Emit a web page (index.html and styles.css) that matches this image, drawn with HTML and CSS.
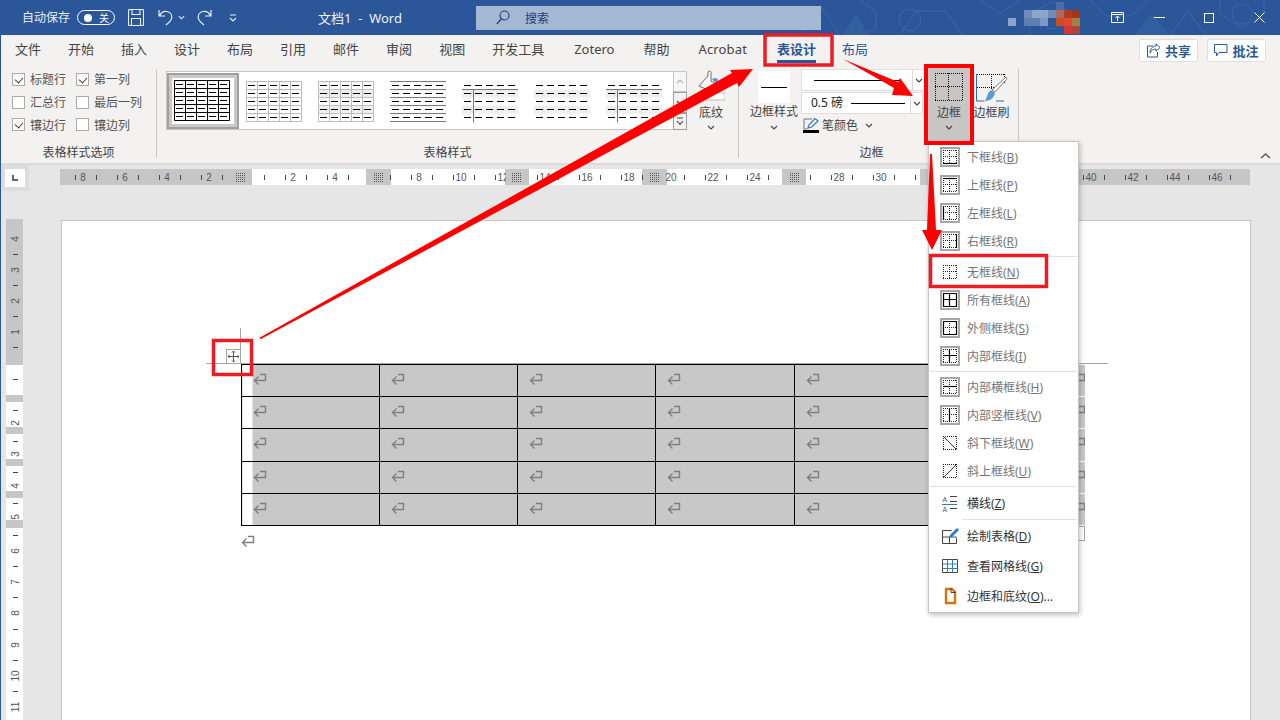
FILE: index.html
```html
<!DOCTYPE html>
<html lang="zh-CN">
<head>
<meta charset="utf-8">
<title>文档1 - Word</title>
<link rel="stylesheet" href="styles.css">
</head>
<body>
<svg class="defs" width="0" height="0" aria-hidden="true">
  <defs>
    <pattern id="dashes" width="11" height="8" patternUnits="userSpaceOnUse"><rect x="2" y="4" width="7" height="1" fill="#000"/></pattern>
    <pattern id="rtick" width="21" height="16" patternUnits="userSpaceOnUse"><rect x="12" y="6" width="1" height="5" fill="#444"/></pattern>
    <pattern id="dots" width="2" height="2" patternUnits="userSpaceOnUse"><rect width="1" height="1" fill="#555"/></pattern>
    <symbol id="frame" viewBox="0 0 20 20"><rect x="1" y="1" width="18" height="18" fill="#fff" stroke="#a6a6a6" stroke-width="2"/></symbol>
    <symbol id="dotgrid" viewBox="0 0 20 20"><path d="M3 3.500h14M3 16.500h14M3 9.500h14M3.500 3v14M16.500 3v14M9.500 3v14" fill="none" stroke="#222" stroke-dasharray="1 1"/></symbol>
    <symbol id="crossdots" viewBox="0 0 20 20"><path d="M3 9.500h14M9.500 3v14" fill="none" stroke="#222" stroke-dasharray="1 1"/></symbol>
    <symbol id="diagbox" viewBox="0 0 20 20"><path d="M3 3.500h14M3 16.500h14M3.500 3v14M16.500 3v14" fill="none" stroke="#222" stroke-dasharray="1 1"/></symbol>
    <symbol id="ret" viewBox="0 0 14 13"><path d="M7 1.500h5.500v6H2M5.500 3.500L1.500 7.500l4 4" fill="none" stroke="#7f7f7f" stroke-width="1.400"/></symbol>
    <symbol id="chev" viewBox="0 0 8 5"><path d="M1 1l3 3 3-3" fill="none" stroke="#444" stroke-width="1.100"/></symbol>
    <symbol id="t-dash" viewBox="0 0 56 42"><rect x="1" y="0" width="55" height="40" fill="url(#dashes)"/></symbol>
    <symbol id="t-cells" viewBox="0 0 56 42"><path d="M.5.500h55v40H.5zM11.500.500v40M22.500.500v40M33.500.500v40M44.500.500v40M.5 8.500h55M.5 16.500h55M.5 24.500h55M.5 32.500h55" fill="none" stroke="currentColor"/></symbol>
    <symbol id="t-bands" viewBox="0 0 56 42"><rect x="0" y="9" width="56" height="7.500" fill="#eee"/><rect x="0" y="25" width="56" height="7.500" fill="#eee"/></symbol>
  </defs>
</svg>

<div class="window">
  <header class="titlebar">
    <svg class="pattern" width="490" height="35" viewBox="0 0 490 35"><g fill="none" stroke="#3b68a8"><path d="M10 35L30 5l20 30zM70 0l16 12v16l-16 7M110 35l16-24h30l16 24M190 0l20 14 20-14M240 35V14l22-12 22 12v21M300 0l16 16h26l16-16M380 35l18-24 18 24M430 0v14l22 14 22-14V0"/><circle cx="262" cy="20" r="9"/><circle cx="120" cy="20" r="11"/><circle cx="452" cy="14" r="10"/></g><path d="M345 35l17-22 17 22zM52 35l14-20 14 20z" fill="#325f9f"/></svg>
    <span class="autosave">自动保存</span>
    <span class="toggle"><i class="knob"></i><span class="toggle-text">关</span></span>
    <svg class="qa-save" width="16" height="17" viewBox="0 0 16 17"><path d="M.5 1.500a1 1 0 0 1 1-1h13a1 1 0 0 1 1 1v14a1 1 0 0 1-1 1h-13a1 1 0 0 1-1-1zM4 .5v5h8v-5M3.500 16.500v-7h9v7" fill="none" stroke="#eaf0f8" stroke-width="1.100"/></svg>
    <svg class="qa-undo" width="15" height="17" viewBox="0 0 15 17"><path d="M1 1v6h6M1.500 7C3 3.500 6 2 9 2.500c3 .6 5 3.200 4.800 6-.2 3-2.600 5-5.800 7.500" fill="none" stroke="#eaf0f8" stroke-width="1.200"/></svg>
    <svg class="qa-chev" width="7" height="5" viewBox="0 0 8 5"><path d="M1 1l3 3 3-3" fill="none" stroke="#eaf0f8" stroke-width="1.200"/></svg>
    <svg class="qa-redo" width="15" height="17" viewBox="0 0 15 17"><path d="M14 1v6H8M13.500 7C12 3.500 9 2 6 2.500c-3 .6-5 3.200-4.800 6 .2 3 2.600 5 5.800 7.500" fill="none" stroke="#eaf0f8" stroke-width="1.200"/></svg>
    <svg class="qa-more" width="8" height="8" viewBox="0 0 8 8"><path d="M1 1h6M1 4l3 3 3-3" fill="none" stroke="#eaf0f8" stroke-width="1.100"/></svg>
    <span class="doc-title">文档1&nbsp; -&nbsp; Word</span>
    <div class="search">
      <svg width="14" height="15" viewBox="0 0 14 15"><circle cx="8.500" cy="5.500" r="4.500" fill="none" stroke="#1f3f72" stroke-width="1.100"/><path d="M5.300 9L.8 14" stroke="#1f3f72" stroke-width="1.200"/></svg>
      <span>搜索</span>
    </div>
    <svg class="avatar" width="72" height="32" viewBox="0 0 72 32">
      <rect x="16" y="8" width="40" height="8" fill="#6f8dbb"/><rect x="24" y="8" width="16" height="8" fill="#8ea5c9"/>
      <rect x="0" y="16" width="8" height="8" fill="#8ea5c9"/><rect x="16" y="16" width="24" height="8" fill="#5f7fb2"/><rect x="32" y="16" width="8" height="8" fill="#7f99c2"/>
      <rect x="48" y="0" width="8" height="8" fill="#4d6ca5"/>
      <rect x="48" y="8" width="8" height="8" fill="#a86a62"/><rect x="56" y="8" width="8" height="8" fill="#b23a22"/><rect x="64" y="8" width="8" height="8" fill="#9e3820"/>
      <rect x="48" y="16" width="8" height="8" fill="#c8501f"/><rect x="56" y="16" width="8" height="8" fill="#e24533"/><rect x="64" y="16" width="8" height="8" fill="#a08344"/>
      <rect x="56" y="24" width="8" height="8" fill="#d23a33"/><rect x="64" y="24" width="8" height="8" fill="#b04535"/>
    </svg>
    <svg class="win-ribbon" width="13" height="11" viewBox="0 0 13 11"><path d="M.5.500h12v10H.5zM.5 2.500h12M6.500 9V4.500M4.500 6l2-2 2 2" fill="none" stroke="#fff"/></svg>
    <svg class="win-min" width="11" height="1" viewBox="0 0 11 1"><rect width="11" height="1" fill="#fff"/></svg>
    <svg class="win-max" width="10" height="10" viewBox="0 0 10 10"><rect x=".5" y=".5" width="9" height="9" fill="none" stroke="#fff"/></svg>
    <svg class="win-close" width="11" height="11" viewBox="0 0 11 11"><path d="M.5.500l10 10M10.500.500l-10 10" stroke="#fff"/></svg>
  </header>

  <nav class="tabs">
    <span class="tab">文件</span><span class="tab">开始</span><span class="tab">插入</span><span class="tab">设计</span><span class="tab">布局</span><span class="tab">引用</span><span class="tab">邮件</span><span class="tab">审阅</span><span class="tab">视图</span><span class="tab">开发工具</span><span class="tab tab-zotero">Zotero</span><span class="tab">帮助</span><span class="tab tab-acrobat">Acrobat</span><span class="tab tab-active">表设计</span><span class="tab tab-blue">布局</span>
    <span class="tab-actions">
      <span class="pill"><svg width="15" height="15" viewBox="0 0 15 15"><path d="M10 .8l4 3.700-4 3.700V6C7 6 5 7.500 4 10c0-4 2-6.500 6-7zM7 3H1.500v11h10V9" fill="none" stroke="#2b579a" stroke-width="1"/></svg>共享</span>
      <span class="pill"><svg width="14" height="14" viewBox="0 0 14 14"><path d="M.5 1.500h12.500v8H5L2.500 13v-3.500h-2z" fill="none" stroke="#2b579a"/></svg>批注</span>
    </span>
  </nav>

  <section class="ribbon">
    <div class="group g-options">
      <div class="checks">
        <label class="check"><i class="box on"></i>标题行</label><label class="check"><i class="box on"></i>第一列</label>
        <label class="check"><i class="box"></i>汇总行</label><label class="check"><i class="box"></i>最后一列</label>
        <label class="check"><i class="box on"></i>镶边行</label><label class="check"><i class="box"></i>镶边列</label>
      </div>
      <div class="group-label">表格样式选项</div>
    </div>

    <div class="group g-styles">
      <div class="styles-row">
        <div class="gallery">
          <div class="thumb thumb-sel"><svg width="56" height="42"><use href="#t-cells" class="ink-black"/><use href="#t-dash"/></svg></div>
          <div class="thumb"><svg width="56" height="42"><use href="#t-cells" class="ink-light"/><use href="#t-dash"/></svg></div>
          <div class="thumb"><svg width="56" height="42"><use href="#t-bands"/><use href="#t-cells" class="ink-light"/><use href="#t-dash"/></svg></div>
          <div class="thumb"><svg width="56" height="42" viewBox="0 0 56 42"><path d="M0 .5h56M0 8.500h56M0 16.500h56M0 24.500h56M0 32.500h56M0 40.500h56" stroke="#777"/><use href="#t-dash"/></svg></div>
          <div class="thumb"><svg width="56" height="42" viewBox="0 0 56 42"><use href="#t-bands"/><path d="M0 8.500h56M11.500 8.500v33" stroke="#777"/><use href="#t-dash"/></svg></div>
          <div class="thumb"><svg width="56" height="42"><use href="#t-bands"/><use href="#t-dash"/></svg></div>
          <div class="thumb"><svg width="56" height="42" viewBox="0 0 56 42"><use href="#t-bands"/><path d="M0 8.500h56M11.500 8.500v33" stroke="#777"/><use href="#t-dash"/></svg></div>
        </div>
        <div class="scroller">
          <span class="sc sc-up"><svg width="8" height="5" viewBox="0 0 8 5"><path d="M1 4l3-3 3 3" fill="none" stroke="#b5b5b5" stroke-width="1.100"/></svg></span>
          <span class="sc sc-down"><svg width="8" height="5"><use href="#chev"/></svg></span>
          <span class="sc sc-more"><svg width="8" height="9" viewBox="0 0 8 9"><path d="M1 1h6M1 4l3 3.500L7 4" fill="none" stroke="#444" stroke-width="1.100"/></svg></span>
        </div>
        <div class="big-btn shade-btn">
          <svg width="28" height="32" viewBox="0 0 28 32"><path d="M2 16L11 6V2.500a1.500 1.500 0 0 1 3 0V11l4 3-7 6z" fill="#fff" stroke="#666"/><path d="M15 9c3-2 6-1 6 1s-2 2.500-4 2" fill="#5b9bd5"/><rect x="4" y="23" width="24" height="7" fill="#fff" stroke="#bbb"/></svg>
          <span>底纹</span>
          <svg class="chev" width="8" height="5"><use href="#chev"/></svg>
        </div>
      </div>
      <div class="group-label">表格样式</div>
    </div>

    <div class="group g-borders">
      <div class="borders-row">
        <div class="big-btn style-btn">
          <span class="swatch"><i></i></span>
          <span>边框样式</span>
          <svg class="chev" width="8" height="5"><use href="#chev"/></svg>
        </div>
        <div class="pen-col">
          <div class="combo"><span class="combo-main"><i class="pen-line pen-long"></i></span><span class="combo-arrow"><svg width="8" height="5"><use href="#chev"/></svg></span></div>
          <div class="combo combo-2"><span class="combo-main"><span class="weight">0.5 磅</span><i class="pen-line"></i></span><span class="combo-arrow"><svg width="8" height="5"><use href="#chev"/></svg></span></div>
          <div class="pen-color">
            <svg width="16" height="15" viewBox="0 0 16 15"><path d="M1 11V1h8M1 11h3" fill="none" stroke="#777"/><path d="M5 10l1-3 6-6.500 3 2.500-6.500 6z" fill="#fff" stroke="#2a7cc7" stroke-width="1.200"/><rect y="12" width="16" height="3" fill="#000"/></svg>
            <span>笔颜色</span>
            <svg width="8" height="5"><use href="#chev"/></svg>
          </div>
        </div>
        <div class="big-btn borders-btn">
          <svg width="28" height="28" viewBox="0 0 28 28"><path d="M0 .5h28M0 27.500h28M0 13.500h28M.5 0v28M27.500 0v28M13.500 0v28" fill="none" stroke="#111" stroke-dasharray="1 1"/></svg>
          <span>边框</span>
          <svg class="chev" width="8" height="5"><use href="#chev"/></svg>
        </div>
        <div class="big-btn brush-btn">
          <svg width="32" height="32" viewBox="0 0 32 32"><path d="M1 2.500h28M1 15.500h20M15.500 2v16M28.500 2v10" fill="none" stroke="#111" stroke-dasharray="1 1"/><path d="M.5 2v27h8M20 29h8" fill="none" stroke="#2b6cb0"/><path d="M30 5c1 1 1 2 0 3L19 20l-3-2z" fill="#fff" stroke="#777"/><path d="M15 18l4 3c-1 5-5 8-10 8 2-3 2-8 6-11z" fill="#5b9bd5"/></svg>
          <span>边框刷</span>
        </div>
      </div>
      <div class="group-label borders-label">边框</div>
    </div>

    <svg class="collapse" width="11" height="6" viewBox="0 0 11 6"><path d="M1 5l4.500-4L10 5" fill="none" stroke="#444" stroke-width="1.200"/></svg>
  </section>

  <main class="workspace">
    <div class="corner"><div class="tabstop"><svg width="6" height="6" viewBox="0 0 6 6"><path d="M0 0h2v4h4v2H0z" fill="#666"/></svg></div></div>
    <svg class="hruler" width="1190" height="16" viewBox="60 0 1190 16">
      <rect x="60" width="1190" height="16" fill="#c6c6c6"/>
      <rect x="252" width="114" height="16" fill="#fff"/><rect x="391" width="114" height="16" fill="#fff"/><rect x="529" width="113" height="16" fill="#fff"/><rect x="667" width="115" height="16" fill="#fff"/><rect x="806" width="114" height="16" fill="#fff"/>
      <rect x="60" width="1190" height="16" fill="url(#rtick)"/>
      <g class="rtext">
        <text x="83" y="12">8</text><text x="125" y="12">6</text><text x="167" y="12">4</text><text x="209" y="12">2</text>
        <text x="293" y="12">2</text><text x="335" y="12">4</text><text x="419" y="12">8</text><text x="461" y="12">10</text><text x="503" y="12">12</text><text x="545" y="12">14</text><text x="587" y="12">16</text><text x="629" y="12">18</text><text x="671" y="12">20</text><text x="713" y="12">22</text><text x="755" y="12">24</text><text x="839" y="12">28</text><text x="881" y="12">30</text><text x="1091" y="12">40</text><text x="1133" y="12">42</text><text x="1175" y="12">44</text><text x="1217" y="12">46</text>
      </g>
      <rect x="232" width="19" height="16" fill="#c6c6c6"/><rect x="366" width="23" height="16" fill="#c6c6c6"/><rect x="506" width="22" height="16" fill="#c6c6c6"/><rect x="644" width="22" height="16" fill="#c6c6c6"/><rect x="783" width="22" height="16" fill="#c6c6c6"/><rect x="920" width="20" height="16" fill="#c6c6c6"/>
      <rect x="236" y="3" width="10" height="10" fill="url(#dots)"/><rect x="374" y="3" width="10" height="10" fill="url(#dots)"/><rect x="512" y="3" width="10" height="10" fill="url(#dots)"/><rect x="650" y="3" width="10" height="10" fill="url(#dots)"/><rect x="789" y="3" width="10" height="10" fill="url(#dots)"/>
    </svg>
    <svg class="vruler" width="17" height="501" viewBox="0 219 17 501">
      <rect y="219" width="17" height="501" fill="#fff"/>
      <rect y="219" width="17" height="146" fill="#c6c6c6"/>
      <path d="M7 254.500h5M7 285.500h5M7 316.500h5M7 347.500h5M7 379.500h5M7 410.500h5M7 441.500h5M7 472.500h5M7 503.500h5M7 535.500h5M7 566.500h5M7 597.500h5M7 629.500h5M7 660.500h5M7 691.500h5" stroke="#444"/>
      <g class="rtext">
        <text transform="translate(13 239) rotate(-90)">4</text><text transform="translate(13 270) rotate(-90)">3</text><text transform="translate(13 301) rotate(-90)">2</text><text transform="translate(13 332) rotate(-90)">1</text>
        <text transform="translate(13 423) rotate(-90)">2</text><text transform="translate(13 454) rotate(-90)">3</text><text transform="translate(13 486) rotate(-90)">4</text><text transform="translate(13 517) rotate(-90)">5</text><text transform="translate(13 551) rotate(-90)">6</text><text transform="translate(13 582) rotate(-90)">7</text><text transform="translate(13 613) rotate(-90)">8</text><text transform="translate(13 645) rotate(-90)">9</text><text transform="translate(13 676) rotate(-90)">10</text><text transform="translate(13 707) rotate(-90)">11</text>
      </g>
      <rect y="395" width="17" height="7" fill="#c6c6c6"/><rect y="427" width="17" height="7" fill="#c6c6c6"/><rect y="459" width="17" height="7" fill="#c6c6c6"/><rect y="491" width="17" height="7" fill="#c6c6c6"/><rect y="520" width="17" height="8" fill="#c6c6c6"/>
    </svg>

    <article class="page">
      <i class="guide guide-h"></i><i class="guide guide-v"></i>
      <span class="move-handle"><svg width="11" height="11" viewBox="0 0 11 11"><path d="M5.500 0v11M0 5.500h11M4 1.500L5.500 0 7 1.500M4 9.500L5.500 11 7 9.500M1.500 4L0 5.500 1.500 7M9.500 4L11 5.500 9.500 7" fill="none" stroke="#555"/></svg></span>
      <table class="doc-table">
        <tr><td class="first"><svg width="14" height="13"><use href="#ret"/></svg></td><td><svg width="14" height="13"><use href="#ret"/></svg></td><td><svg width="14" height="13"><use href="#ret"/></svg></td><td><svg width="14" height="13"><use href="#ret"/></svg></td><td><svg width="14" height="13"><use href="#ret"/></svg></td><td></td><td class="last"></td><td class="eor"><svg width="14" height="13"><use href="#ret"/></svg></td></tr>
        <tr><td class="first"><svg width="14" height="13"><use href="#ret"/></svg></td><td><svg width="14" height="13"><use href="#ret"/></svg></td><td><svg width="14" height="13"><use href="#ret"/></svg></td><td><svg width="14" height="13"><use href="#ret"/></svg></td><td><svg width="14" height="13"><use href="#ret"/></svg></td><td></td><td class="last"></td><td class="eor"><svg width="14" height="13"><use href="#ret"/></svg></td></tr>
        <tr class="row-tall"><td class="first"><svg width="14" height="13"><use href="#ret"/></svg></td><td><svg width="14" height="13"><use href="#ret"/></svg></td><td><svg width="14" height="13"><use href="#ret"/></svg></td><td><svg width="14" height="13"><use href="#ret"/></svg></td><td><svg width="14" height="13"><use href="#ret"/></svg></td><td></td><td class="last"></td><td class="eor"><svg width="14" height="13"><use href="#ret"/></svg></td></tr>
        <tr><td class="first"><svg width="14" height="13"><use href="#ret"/></svg></td><td><svg width="14" height="13"><use href="#ret"/></svg></td><td><svg width="14" height="13"><use href="#ret"/></svg></td><td><svg width="14" height="13"><use href="#ret"/></svg></td><td><svg width="14" height="13"><use href="#ret"/></svg></td><td></td><td class="last"></td><td class="eor"><svg width="14" height="13"><use href="#ret"/></svg></td></tr>
        <tr><td class="first"><svg width="14" height="13"><use href="#ret"/></svg></td><td><svg width="14" height="13"><use href="#ret"/></svg></td><td><svg width="14" height="13"><use href="#ret"/></svg></td><td><svg width="14" height="13"><use href="#ret"/></svg></td><td><svg width="14" height="13"><use href="#ret"/></svg></td><td></td><td class="last"></td><td class="eor"><svg width="14" height="13"><use href="#ret"/></svg></td></tr>
      </table>
      <svg class="para-mark" width="14" height="13"><use href="#ret"/></svg>
      <i class="resize-handle"></i>
    </article>
  </main>

  <ul class="menu">
    <li class="mi"><svg width="20" height="20" viewBox="0 0 20 20"><use href="#frame"/><use href="#dotgrid"/><path d="M3 16.500h14" stroke="#000" stroke-width="1.200"/></svg><span>下框线(<u>B</u>)</span></li>
    <li class="mi"><svg width="20" height="20" viewBox="0 0 20 20"><use href="#frame"/><use href="#dotgrid"/><path d="M3 3.500h14" stroke="#000" stroke-width="1.200"/></svg><span>上框线(<u>P</u>)</span></li>
    <li class="mi"><svg width="20" height="20" viewBox="0 0 20 20"><use href="#frame"/><use href="#dotgrid"/><path d="M3.500 3v14" stroke="#000" stroke-width="1.200"/></svg><span>左框线(<u>L</u>)</span></li>
    <li class="mi mi-sep"><svg width="20" height="20" viewBox="0 0 20 20"><use href="#frame"/><use href="#dotgrid"/><path d="M16.500 3v14" stroke="#000" stroke-width="1.200"/></svg><span>右框线(<u>R</u>)</span></li>
    <li class="mi"><svg width="20" height="20" viewBox="0 0 20 20"><use href="#dotgrid"/></svg><span>无框线(<u>N</u>)</span></li>
    <li class="mi"><svg width="20" height="20" viewBox="0 0 20 20"><use href="#frame"/><path d="M3.500 3.500h13v13h-13zM9.500 3.500v13M3.500 9.500h13" fill="none" stroke="#000" stroke-width="1.200"/></svg><span>所有框线(<u>A</u>)</span></li>
    <li class="mi"><svg width="20" height="20" viewBox="0 0 20 20"><use href="#frame"/><use href="#crossdots"/><path d="M3.500 3.500h13v13h-13z" fill="none" stroke="#000" stroke-width="1.200"/></svg><span>外侧框线(<u>S</u>)</span></li>
    <li class="mi mi-sep"><svg width="20" height="20" viewBox="0 0 20 20"><use href="#frame"/><use href="#diagbox"/><path d="M9.500 3.500v13M3.500 9.500h13" stroke="#000" stroke-width="1.200"/></svg><span>内部框线(<u>I</u>)</span></li>
    <li class="mi"><svg width="20" height="20" viewBox="0 0 20 20"><use href="#frame"/><use href="#dotgrid"/><path d="M3.500 9.500h13" stroke="#000" stroke-width="1.200"/></svg><span>内部横框线(<u>H</u>)</span></li>
    <li class="mi"><svg width="20" height="20" viewBox="0 0 20 20"><use href="#frame"/><use href="#dotgrid"/><path d="M9.500 3.500v13" stroke="#000" stroke-width="1.200"/></svg><span>内部竖框线(<u>V</u>)</span></li>
    <li class="mi"><svg width="20" height="20" viewBox="0 0 20 20"><use href="#diagbox"/><path d="M4 4l12.500 12.500" stroke="#333"/></svg><span>斜下框线(<u>W</u>)</span></li>
    <li class="mi mi-sep"><svg width="20" height="20" viewBox="0 0 20 20"><use href="#diagbox"/><path d="M16 4L3.500 16.500" stroke="#333"/></svg><span>斜上框线(<u>U</u>)</span></li>
    <li class="mi mi-dark mi-sep-short"><svg width="20" height="20" viewBox="0 0 20 20"><path d="M10 3.500h7M10 8.500h7M10 15.500h7" fill="none" stroke="#444"/><path d="M2 11.500h15" stroke="#2a7cc7"/><text x="2.500" y="9" class="mini">A</text><text x="2.500" y="19" class="mini">A</text></svg><span>横线(<u>Z</u>)</span></li>
    <li class="mi mi-dark mi-tall"><svg width="20" height="20" viewBox="0 0 20 20"><path d="M2.500 4.500h9M2.500 4.500v13h14v-6M2.500 11h14M9.500 11v6.500" fill="none" stroke="#444"/><path d="M9 12l1-3 7-7 2 2-7 7z" fill="#2a7cc7"/></svg><span>绘制表格(<u>D</u>)</span></li>
    <li class="mi mi-dark mi-tall"><svg width="20" height="20" viewBox="0 0 20 20"><path d="M2.500 3.500h15v13h-15z" fill="none" stroke="#444"/><path d="M7.500 3.500v13M12.500 3.500v13M2.500 8h15M2.500 12.500h15" stroke="#2a7cc7"/></svg><span>查看网格线(<u>G</u>)</span></li>
    <li class="mi mi-dark mi-tall"><svg width="20" height="20" viewBox="0 0 20 20"><path d="M6 3h6l3 3v11H6z" fill="#fff" stroke="#d9730d" stroke-width="2.400"/><path d="M11 2v4.500h5" fill="none" stroke="#444"/></svg><span>边框和底纹(<u>O</u>)...</span></li>
  </ul>

  <svg class="annot" width="1280" height="720" viewBox="0 0 1280 720">
    <g fill="none" stroke="#ed1c24" stroke-width="3.500">
      <rect x="765" y="35" width="67" height="30"/>
      <rect x="213.500" y="340.500" width="38" height="34"/>
      <rect x="930.500" y="255.500" width="116" height="31"/>
    </g>
    <rect x="926" y="66" width="46" height="77" fill="none" stroke="#f00" stroke-width="4"/>
    <path d="M259 338L732 73l-2-3 23-1-14 18-2-4L261 339z" fill="#f00"/>
    <path d="M843 59l55 23 2-4 13 18-21-1 2-7z" fill="#f00"/>
    <path d="M930 154h2l4 76h6l-10 20-10-20h5z" fill="#f00"/>
  </svg>
</div>
</body>
</html>
```
FILE: styles.css
```css
* { box-sizing: border-box; }
html, body { margin: 0; padding: 0; }
body { width: 1280px; height: 720px; overflow: hidden; font-family: "Noto Sans", "Noto Sans CJK SC", sans-serif; font-size: 12px; color: #444; }
.defs { display: block; }
svg { display: block; flex: none; }
.window { position: relative; width: 1280px; height: 720px; display: flex; flex-direction: column; overflow: hidden; border-left: 1px solid #2b579a; background: #e6e6e6; }

/* title bar */
.titlebar { position: relative; flex: none; height: 35px; margin-left: -1px; background: #2b579a; color: #fff; display: flex; align-items: center; }
.pattern { position: absolute; left: 790px; top: 0; }
.titlebar > :not(.pattern) { position: relative; }
.autosave { margin-left: 22px; width: 48px; line-height: 16px; color: #e9eef6; }
.toggle { margin-left: 7px; width: 38px; height: 15px; border: 1px solid #fff; border-radius: 8px; display: flex; align-items: center; justify-content: space-between; padding: 0 5px; }
.knob { width: 8px; height: 8px; background: #fff; border-radius: 50%; margin-left: 1px; }
.toggle-text { font-size: 10px; line-height: 12px; }
.qa-save { margin-left: 13px; }
.qa-undo { margin-left: 14px; }
.qa-chev { margin-left: 5px; }
.qa-redo { margin-left: 12px; }
.qa-more { margin-left: 17px; }
.doc-title { margin-left: 81px; width: 85px; font-size: 13px; white-space: nowrap; color: #eef2f8; }
.search { margin-left: 73px; width: 345px; height: 24px; background: #a4b8d3; display: flex; align-items: center; color: #1f3f72; padding-left: 20px; gap: 15px; }
.avatar { margin-left: 187px; }
.win-ribbon { margin-left: 31px; }
.win-min { margin-left: 30px; }
.win-max { margin-left: 39px; }
.win-close { margin-left: 40px; }

/* tabs */
.tabs { flex: none; height: 30px; display: flex; align-items: center; background: #f3f2f1; padding: 0 0 2px 14px; font-size: 13px; color: #444; }
.tab { margin-right: 27px; white-space: nowrap; line-height: 18px; position: relative; }
.tab-zotero { margin-left: 3px; margin-right: 29px; }
.tab-acrobat { margin-left: 2px; margin-right: 30px; letter-spacing: .15px; }
.tab-active { color: #2b579a; font-weight: 700; margin-right: 26px; }
.tab-active::after { content: ""; position: absolute; left: 0; right: 0; bottom: -5px; height: 3px; background: #2b579a; }
.tab-blue { color: #2b579a; }
.tab-actions { margin-left: auto; margin-right: 14px; margin-top: 2px; display: flex; gap: 9px; }
.pill { width: 59px; height: 23px; background: #fff; border: 1px solid #e1dfdd; border-radius: 2px; display: flex; align-items: center; justify-content: center; gap: 4px; color: #2b579a; font-weight: 700; font-size: 13px; }

/* ribbon */
.ribbon { position: relative; flex: none; height: 100px; background: #f3f2f1; display: flex; border-bottom: 2px solid #dcdbda; }
.group { height: 89px; margin-top: 4px; border-right: 1px solid #c8c6c4; display: flex; flex-direction: column; flex: none; }
.group-label { margin-top: auto; margin-bottom: -4px; height: 18px; line-height: 18px; text-align: center; color: #444; }
.g-options { width: 156px; }
.checks { display: grid; grid-template-columns: 64px 1fr; grid-auto-rows: 22.700px; padding: 0 0 0 11px; margin-top: -1px; }
.check { display: flex; align-items: center; gap: 5px; white-space: nowrap; color: #555; }
.box { width: 13px; height: 13px; background: #fff; border: 1px solid #ababab; position: relative; flex: none; }
.box.on::after { content: ""; position: absolute; left: 3px; top: 1px; width: 5px; height: 7px; border: solid #333; border-width: 0 1px 1px 0; transform: rotate(40deg) scale(.9); }
.g-styles { width: 582px; }
.styles-row { display: flex; padding: 2px 0 0 9px; }
.gallery { width: 507px; height: 59px; background: #fff; border: 1px solid #c8c6c4; border-right: 0; display: flex; padding-top: 1px; }
.thumb { width: 72px; height: 56px; flex: none; padding: 8px 0 0 7px; }
.thumb-sel { border: 2px solid #a0a0a0; box-shadow: inset 0 0 0 3px #c8c8c8; padding: 5px 0 0 5px; }
.ink-black { color: #000; }
.ink-light { color: #bdbdbd; }
.scroller { width: 14px; height: 59px; display: flex; flex-direction: column; }
.sc { background: #f3f2f1; border: 1px solid #c8c6c4; display: flex; align-items: center; justify-content: center; }
.sc-up { height: 21px; background: #f6f6f6; }
.sc-down { height: 21px; border-color: #9e9e9e; }
.sc-more { height: 17px; border-color: #9e9e9e; }
.big-btn { display: flex; flex-direction: column; align-items: center; white-space: nowrap; color: #444; }
.big-btn .chev { margin-top: 4px; }
.shade-btn { width: 36px; margin-left: 6px; margin-top: -1px; }
.shade-btn span { margin-top: 2px; line-height: 18px; }
.shade-btn .chev { margin-top: 3px; }
.g-borders { width: 280px; }
.borders-row { display: flex; }
.style-btn { margin-left: 11px; width: 48px; padding-top: 2px; }
.style-btn span:not(.swatch) { line-height: 18px; }
.swatch { width: 32px; height: 32px; background: #fff; display: flex; align-items: center; justify-content: center; }
.swatch i { width: 26px; height: 1px; background: #000; }
.pen-col { margin-left: 3px; width: 124px; }
.combo { height: 22px; width: 124px; display: flex; background: #fff; border: 1px solid #e1dfdd; }
.combo-2 { margin-top: 1px; width: 122px; }
.combo-main { flex: 1; display: flex; align-items: center; padding-left: 9px; border-right: 1px solid #d8d8d8; color: #222; }
.combo-arrow { width: 11px; display: flex; align-items: center; justify-content: center; }
.pen-line { height: 1px; background: #000; width: 54px; margin-left: 9px; }
.pen-long { width: 86px; margin-left: 3px; }
.weight { white-space: nowrap; width: 31px; margin-top: -3px; }
.pen-color { display: flex; align-items: center; height: 18px; margin-top: 2px; margin-left: 2px; gap: 3px; color: #444; }
.pen-color svg:last-child { margin-left: 4px; }
.borders-btn { margin-left: 3px; margin-top: -1px; width: 42px; height: 73px; background: #c8c6c4; padding-top: 5px; }
.borders-btn span { margin-top: 3px; line-height: 18px; }
.borders-btn .chev { margin-top: 3px; }
.brush-btn { margin-left: 5px; width: 34px; padding-top: 3px; }
.brush-btn span { line-height: 18px; margin-left: -1px; }
.borders-label { padding-right: 14px; }
.collapse { position: absolute; left: 1259px; top: 88px; }

/* workspace */
.workspace { flex: 1; min-height: 0; display: grid; grid-template-columns: 60px 1190px; grid-template-rows: 55px 1fr; overflow: hidden; background: #e6e6e6; }
.tabstop { width: 28px; height: 26px; border: 4px solid #dcdcdc; background: #fff; display: flex; align-items: center; justify-content: center; }
.hruler { margin: 4px 0 0 -1px; }
.vruler { margin-left: 5px; margin-top: -1px; }
.rtext { font-family: "Liberation Sans", sans-serif; font-size: 10px; fill: #555; text-anchor: middle; }
.page { position: relative; height: 600px; background: #fff; border: 1px solid #c6c6c6; padding: 143px 0 0 179px; overflow: hidden; }
.guide { position: absolute; background: #a6a6a6; }
.guide-h { left: 144px; top: 142px; width: 902px; height: 1px; }
.guide-v { left: 178px; top: 107px; width: 1px; height: 36px; }
.move-handle { position: absolute; left: 164px; top: 128px; width: 15px; height: 15px; border: 1px solid #a6a6a6; background: #fff; display: flex; align-items: center; justify-content: center; }
.doc-table { border-collapse: collapse; table-layout: fixed; width: 843px; }
.doc-table td { width: 138px; height: 32px; padding: 8px 0 0 11px; border: 1px solid #000; background: #c8c8c8; vertical-align: top; }
.doc-table td:nth-child(4), .doc-table td:nth-child(5) { width: 139px; }
.doc-table .row-tall td { height: 33px; }
.doc-table td.first { background: linear-gradient(90deg, #fff 10px, #c8c8c8 10px); }
.doc-table td.eor { width: 13px; border: 0; border-bottom: 1px solid #fff; padding: 8px 0 0 0; overflow: hidden; }
.doc-table td.last { width: 0; padding: 0; border-width: 1px 0 1px 0; }
.para-mark { margin-top: 9px; }
.resize-handle { position: absolute; left: 1016px; top: 305px; width: 7px; height: 15px; background: #fff; border: 1px solid #a6a6a6; }

/* menu */
.menu { position: absolute; left: 927px; top: 141px; width: 151px; height: 472px; margin: 0; padding: 1px 0 0; list-style: none; background: #fff; border: 1px solid #c6c6c6; box-shadow: 1px 2px 5px rgba(0,0,0,.25); }
.mi { height: 28px; display: flex; align-items: center; padding-left: 11px; gap: 7px; color: #767676; white-space: nowrap; position: relative; }
.mi-sep { height: 31px; padding-bottom: 3px; }
.mi-sep::after { content: ""; position: absolute; left: 1px; right: 1px; bottom: 1px; height: 1px; background: #e1e1e1; }
.mi-dark { color: #333; }
.mi-sep-short { height: 33px; padding-bottom: 3px; }
.mi-sep-short::after { content: ""; position: absolute; left: 33px; right: 1px; bottom: 1px; height: 1px; background: #e1e1e1; }
.mi-tall { height: 30px; }
.mini { font-size: 7px; fill: #555; font-family: "Liberation Sans", sans-serif; }

.annot { position: absolute; left: -1px; top: 0; pointer-events: none; }
```
